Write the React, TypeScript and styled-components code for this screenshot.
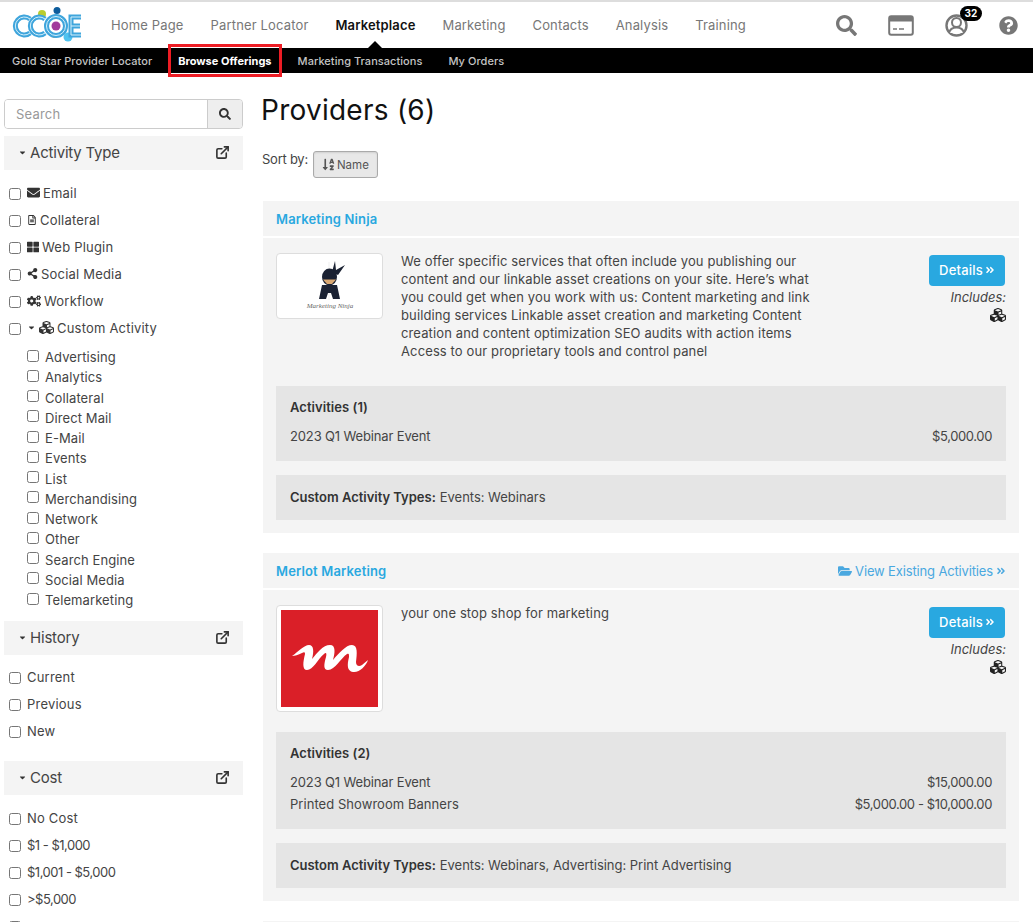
import React from "react"
import styled, { createGlobalStyle } from "styled-components"
import {
  FaAngleDoubleRight,
  FaCaretDown,
  FaCogs,
  FaCubes,
  FaEnvelope,
  FaFolderOpen,
  FaQuestionCircle,
  FaRegFileAlt,
  FaSearch,
  FaShareAlt,
  FaSortAlphaDown,
  FaThLarge,
} from "react-icons/fa"
import { ExternalLink } from "lucide-react"

const GlobalStyle = createGlobalStyle`
  html, body {
    margin: 0;
    height: 922px;
    overflow: hidden;
    background: #fff;
  }
  body {
    font-family: "Inter", "Liberation Sans", sans-serif;
    font-size: 13px;
    color: #444;
  }
  * {
    box-sizing: border-box;
  }
`

const Page = styled.div`
  height: 922px;
  overflow: hidden;
`
const TopBar = styled.header`
  height: 48px;
  border-top: 2px solid #ddd;
  display: flex;
  align-items: center;
  background: #fff;
`
const LogoWrap = styled.div`
  width: 111px;
  padding-left: 12px;
  display: flex;
`
const NavList = styled.nav`
  display: flex;
  gap: 27px;
  flex: 1;
`
const NavItem = styled.span<{ $active?: boolean }>`
  position: relative;
  font-size: 13px;
  letter-spacing: 0.15px;
  line-height: 46px;
  color: ${p => (p.$active ? "#111" : "#777")};
  font-weight: ${p => (p.$active ? 600 : 400)};
  &::after {
    content: "";
    display: ${p => (p.$active ? "block" : "none")};
    position: absolute;
    left: 50%;
    bottom: 0;
    margin-left: -7px;
    border: 7px solid transparent;
    border-top: 0;
    border-bottom-color: #000;
  }
`
const IconTray = styled.div`
  position: relative;
  display: flex;
  align-items: center;
  color: #777;
  padding-right: 15px;
`
const TrayIcon = styled.span<{ $gap: number }>`
  display: flex;
  margin-right: ${p => p.$gap}px;
  &:last-child {
    margin-right: 0;
  }
`
const Badge = styled.span`
  position: absolute;
  left: 124px;
  top: -8px;
  width: 22px;
  height: 15px;
  border-radius: 8px;
  background: #000;
  color: #fff;
  font-size: 10px;
  font-weight: 700;
  line-height: 15px;
  text-align: center;
`
const SubBar = styled.nav`
  height: 25px;
  background: #000;
  display: flex;
  gap: 26px;
  padding-left: 12px;
  align-items: center;
`
const SubItem = styled.span<{ $active?: boolean }>`
  position: relative;
  font-size: 11px;
  letter-spacing: ${p => (p.$active ? "0" : "0.05px")};
  font-weight: ${p => (p.$active ? 700 : 500)};
  color: ${p => (p.$active ? "#fff" : "#c4c4c4")};
  &::before {
    content: "";
    display: ${p => (p.$active ? "block" : "none")};
    position: absolute;
    left: -10px;
    right: -10px;
    top: -10px;
    bottom: -9px;
    border: 3px solid #ed1c24;
  }
`
const Layout = styled.div`
  display: grid;
  grid-template-columns: 239px 756px;
  column-gap: 20px;
  padding-left: 4px;
`
const Sidebar = styled.aside`
  padding-top: 26px;
`
const SearchBox = styled.div`
  display: flex;
  height: 30px;
  border: 1px solid #ccc;
  border-radius: 4px;
  overflow: hidden;
`
const SearchInput = styled.input`
  flex: 1;
  min-width: 0;
  border: 0;
  outline: 0;
  padding: 0 11px;
  font: inherit;
  letter-spacing: 0.2px;
  color: #444;
  &::placeholder {
    color: #999;
  }
`
const SearchButton = styled.button`
  width: 35px;
  border: 0;
  border-left: 1px solid #ccc;
  background: #eee;
  color: #333;
  display: flex;
  align-items: center;
  justify-content: center;
  padding: 0;
`
const FilterHead = styled.div<{ $top: number }>`
  margin-top: ${p => p.$top}px;
  height: 34px;
  background: #f4f4f4;
  display: flex;
  align-items: center;
  padding: 0 13px 2px 14px;
  font-size: 15px;
  letter-spacing: -0.2px;
  color: #444;
`
const Caret = styled(FaCaretDown)`
  font-size: 9px;
  margin-right: 3px;
  color: #333;
`
const HeadTitle = styled.span`
  flex: 1;
`
const FilterList = styled.div<{ $top: number }>`
  margin-top: ${p => p.$top}px;
`
const FilterRow = styled.label<{ $tight?: boolean }>`
  height: 27px;
  display: flex;
  align-items: center;
  padding: 0 0 2px 5px;
  letter-spacing: ${p => (p.$tight ? "-0.5px" : "0.2px")};
  white-space: nowrap;
  color: #444;
  & > svg {
    color: #333;
    margin-right: 3px;
  }
  & > input {
    margin-top: 3px;
  }
`
const Check = styled.input.attrs({ type: "checkbox" })`
  width: 12px;
  height: 12px;
  margin: 1px 6px 0 0;
  flex: none;
`
const SubList = styled.div`
  margin-top: 5px;
  padding-left: 23px;
`
const SubRow = styled.label`
  height: 20.25px;
  display: flex;
  align-items: center;
  letter-spacing: 0.1px;
  & > input {
    margin: -3px 6px 0 0;
  }
`
const Main = styled.main`
  padding-top: 19px;
`
const Title = styled.h1`
  margin: 0 0 0 -2px;
  font-size: 28px;
  font-weight: 400;
  line-height: 36px;
  letter-spacing: 0.25px;
  color: #111;
`
const SortRow = styled.div`
  margin: 23px 0 23px -1px;
  height: 27px;
  display: flex;
  align-items: flex-start;
`
const SortLabel = styled.span`
  line-height: 17px;
  margin-right: 5px;
  letter-spacing: -0.25px;
`
const SortButton = styled.button`
  width: 65px;
  height: 27px;
  display: flex;
  align-items: center;
  justify-content: center;
  gap: 2px;
  background: #e8e8e8;
  border: 1px solid #aaa;
  border-radius: 3px;
  font: inherit;
  font-size: 11.5px;
  color: #555;
  padding: 0;
  box-shadow: inset 0 1px 2px rgba(0, 0, 0, 0.1);
`
const Card = styled.section`
  background: #f4f4f4;
  margin-bottom: 20px;
  padding-bottom: 13px;
`
const CardHead = styled.div`
  height: 37px;
  border-bottom: 2px solid #fff;
  padding: 0 13px;
  display: flex;
  justify-content: space-between;
  align-items: center;
`
const ProviderName = styled.a`
  color: #29a8e0;
  font-weight: 600;
  letter-spacing: 0.15px;
`
const ExistingLink = styled.a`
  display: flex;
  align-items: center;
  gap: 3px;
  color: #4aa8e0;
  letter-spacing: -0.15px;
`
const CardBody = styled.div`
  padding: 15px 13px 0;
`
const InfoRow = styled.div`
  display: flex;
  margin-bottom: 20px;
`
const LogoBox = styled.div<{ $height: number }>`
  flex: none;
  width: 107px;
  height: ${p => p.$height}px;
  background: #fff;
  border: 1px solid #ddd;
  border-radius: 4px;
  padding: 4px;
  display: flex;
  align-items: center;
  justify-content: center;
`
const Blurb = styled.p`
  flex: 1;
  margin: -1px 0 0 18px;
  padding-bottom: 6px;
  line-height: 18px;
  letter-spacing: 0.12px;
  white-space: nowrap;
`
const Aside = styled.div`
  flex: none;
  width: 90px;
  display: flex;
  flex-direction: column;
  align-items: flex-end;
`
const DetailsButton = styled.button`
  width: 76px;
  height: 31px;
  margin: 2px 1px 0 0;
  border: 0;
  border-radius: 4px;
  background: #29a8e0;
  color: #fff;
  font: inherit;
  font-weight: 500;
  letter-spacing: 0.2px;
  display: flex;
  align-items: center;
  justify-content: center;
  gap: 2px;
  padding: 0 0 1px;
`
const Includes = styled.em`
  margin-top: 2px;
  line-height: 18px;
  letter-spacing: 0;
`
const IncludeIcon = styled(FaCubes)`
  font-size: 16px;
  margin-top: 1px;
  color: #222;
`
const Panel = styled.div`
  background: #e5e5e5;
  padding: 12px 14px 14px;
  letter-spacing: 0.05px;
`
const PanelTitle = styled.div`
  font-weight: 600;
  line-height: 18px;
  margin-bottom: 9px;
  color: #333;
`
const ActivityRow = styled.div`
  display: flex;
  justify-content: space-between;
  line-height: 22px;
`
const NumberedName = styled.span`
  letter-spacing: -0.14px;
`
const Amount = styled.span`
  letter-spacing: -0.38px;
`
const TypesPanel = styled.div`
  margin-top: 14px;
  height: 45px;
  background: #e5e5e5;
  padding: 0 14px 2px;
  display: flex;
  align-items: center;
  gap: 4px;
  letter-spacing: -0.02px;
  & > b {
    font-weight: 600;
    color: #333;
  }
`

const BrandLogo = () => (
  <svg width="70" height="36" viewBox="0 0 70 36">
    <circle cx="45" cy="3.500" r="3.500" fill="#0d5c9c" />
    <circle cx="30" cy="7" r="4" fill="#b9cc2e" />
    <circle cx="56" cy="30" r="4.500" fill="#4fc3f0" />
    <circle cx="42" cy="29" r="2" fill="#e0a060" />
    <g fill="none" stroke="#3fa5dc" strokeWidth="5">
      <path d="M18 12 A9 9 0 1 0 18 26" />
      <path d="M33 12 A9 9 0 1 0 33 26" />
      <circle cx="44" cy="19" r="9.500" />
      <path d="M69 10 H59 V28 H69 M59 19 H68" />
    </g>
    <g fill="none" stroke="#d5f0fb" strokeWidth="1">
      <path d="M18 12 A9 9 0 1 0 18 26" />
      <path d="M33 12 A9 9 0 1 0 33 26" />
      <circle cx="44" cy="19" r="9.500" />
      <path d="M69 10 H59 V28 H69 M59 19 H68" />
    </g>
    <circle cx="44" cy="19" r="4.500" fill="#a23c9c" />
  </svg>
)

const PaymentIcon = () => (
  <svg width="26" height="21" viewBox="0 0 26 21">
    <rect x="1.200" y="1.200" width="23.600" height="18.600" rx="2" fill="none" stroke="#777" strokeWidth="2" />
    <rect x="1" y="2" width="24" height="4.500" fill="#777" />
    <path d="M5 14 H9 M11 14 H16" stroke="#777" strokeWidth="1.600" />
  </svg>
)

const AccountIcon = () => (
  <svg width="23" height="23" viewBox="0 0 23 23">
    <circle cx="11.500" cy="11.500" r="10" fill="none" stroke="#777" strokeWidth="2.400" />
    <circle cx="11.500" cy="8.500" r="4.500" fill="#fff" stroke="#777" strokeWidth="2" />
    <path d="M4 19 C5 14.500 8 13.500 11.500 13.500 C15 13.500 18 14.500 19 19" fill="#fff" stroke="#777" strokeWidth="2" />
  </svg>
)

const NinjaLogo = () => (
  <svg width="80" height="56" viewBox="0 0 80 56">
    <path d="M39 4 V42" stroke="#ddd" strokeWidth="0.500" />
    <path d="M42 14 L45 3 L46 12 L55 7 L48 17 Z" fill="#1b2233" />
    <ellipse cx="39.500" cy="19" rx="7.500" ry="8.500" fill="#1b2233" />
    <path d="M33 21.500 H46 L42 26 H37 Z" fill="#d9a873" />
    <path d="M32 27 H47 L50 41 H43 L41 35 H38 L36 41 H29 Z" fill="#1b2233" />
    <text x="40" y="50" fontSize="7" fontStyle="italic" textAnchor="middle" fill="#666" fontFamily="Liberation Serif, serif">
      Marketing Ninja
    </text>
  </svg>
)

const MerlotLogo = () => (
  <svg width="97" height="97" viewBox="0 0 97 97">
    <rect width="97" height="97" fill="#da1f28" />
    <path
      d="M11 46 C17 42 23 35 28 35 C33 35 33 42 31 49 C36 43 42 35 49 35 C55 35 54 43 52 50 C58 43 65 35 71 35 C77 35 76 44 75 52 C75 56 78 57 81 55 L87 50 C85 56 78 63 72 62 C66 61 66 55 68 47 C68 44 68 43 66 44 C60 48 54 60 47 60 C42 60 43 54 45 47 C46 43 45 42 43 44 C37 49 32 60 26 60 C21 60 22 52 24 44 C24 42 23 42 21 43 C17 45 14 46 11 46 Z"
      fill="#fff"
    />
  </svg>
)

const topFilters = [
  { label: "Email", icon: <FaEnvelope size={13} /> },
  { label: "Collateral", icon: <FaRegFileAlt size={10} /> },
  { label: "Web Plugin", icon: <FaThLarge size={12} /> },
  { label: "Social Media", icon: <FaShareAlt size={11} /> },
  { label: "Workflow", icon: <FaCogs size={14} /> },
]
const customTypes = [
  "Advertising",
  "Analytics",
  "Collateral",
  "Direct Mail",
  "E-Mail",
  "Events",
  "List",
  "Merchandising",
  "Network",
  "Other",
  "Search Engine",
  "Social Media",
  "Telemarketing",
]

function FilterHeading({ title, top }: { title: string; top: number }) {
  return (
    <FilterHead $top={top}>
      <Caret />
      <HeadTitle>{title}</HeadTitle>
      <ExternalLink size={15} strokeWidth={2.6} color="#333" />
    </FilterHead>
  )
}

function Filters() {
  return (
    <Sidebar>
      <SearchBox>
        <SearchInput placeholder="Search" />
        <SearchButton>
          <FaSearch size={12} />
        </SearchButton>
      </SearchBox>
      <FilterHeading title="Activity Type" top={7} />
      <FilterList $top={10}>
        {topFilters.map(f => (
          <FilterRow key={f.label}>
            <Check />
            {f.icon}
            {f.label}
          </FilterRow>
        ))}
        <FilterRow>
          <Check />
          <Caret />
          <FaCubes size={15} />
          Custom Activity
        </FilterRow>
      </FilterList>
      <SubList>
        {customTypes.map(t => (
          <SubRow key={t}>
            <Check />
            {t}
          </SubRow>
        ))}
      </SubList>
      <FilterHeading title="History" top={11} />
      <FilterList $top={9}>
        {["Current", "Previous", "New"].map(t => (
          <FilterRow key={t}>
            <Check />
            {t}
          </FilterRow>
        ))}
      </FilterList>
      <FilterHeading title="Cost" top={16} />
      <FilterList $top={10}>
        <FilterRow>
          <Check />
          No Cost
        </FilterRow>
        {["$1 - $1,000", "$1,001 - $5,000", ">$5,000", ""].map(t => (
          <FilterRow key={t} $tight>
            <Check />
            {t}
          </FilterRow>
        ))}
      </FilterList>
    </Sidebar>
  )
}

export default function App() {
  return (
    <Page>
      <GlobalStyle />
      <TopBar>
        <LogoWrap>
          <BrandLogo />
        </LogoWrap>
        <NavList>
          <NavItem>Home Page</NavItem>
          <NavItem>Partner Locator</NavItem>
          <NavItem $active>Marketplace</NavItem>
          <NavItem>Marketing</NavItem>
          <NavItem>Contacts</NavItem>
          <NavItem>Analysis</NavItem>
          <NavItem>Training</NavItem>
        </NavList>
        <IconTray>
          <TrayIcon $gap={31}>
            <FaSearch size={21} />
          </TrayIcon>
          <TrayIcon $gap={31}>
            <PaymentIcon />
          </TrayIcon>
          <TrayIcon $gap={31}>
            <AccountIcon />
          </TrayIcon>
          <TrayIcon $gap={0}>
            <FaQuestionCircle size={19} />
          </TrayIcon>
          <Badge>32</Badge>
        </IconTray>
      </TopBar>
      <SubBar>
        <SubItem>Gold Star Provider Locator</SubItem>
        <SubItem $active>Browse Offerings</SubItem>
        <SubItem>Marketing Transactions</SubItem>
        <SubItem>My Orders</SubItem>
      </SubBar>
      <Layout>
        <Filters />
        <Main>
          <Title>Providers (6)</Title>
          <SortRow>
            <SortLabel>Sort by:</SortLabel>
            <SortButton>
              <FaSortAlphaDown size={13} />
              Name
            </SortButton>
          </SortRow>
          <Card>
            <CardHead>
              <ProviderName>Marketing Ninja</ProviderName>
            </CardHead>
            <CardBody>
              <InfoRow>
                <LogoBox $height={66}>
                  <NinjaLogo />
                </LogoBox>
                <Blurb>
                  We offer specific services that often include you publishing our
                  <br />
                  content and our linkable asset creations on your site. Here’s what
                  <br />
                  you could get when you work with us: Content marketing and link
                  <br />
                  building services Linkable asset creation and marketing Content
                  <br />
                  creation and content optimization SEO audits with action items
                  <br />
                  Access to our proprietary tools and control panel
                </Blurb>
                <Aside>
                  <DetailsButton>
                    Details <FaAngleDoubleRight size={10} />
                  </DetailsButton>
                  <Includes>Includes:</Includes>
                  <IncludeIcon />
                </Aside>
              </InfoRow>
              <Panel>
                <PanelTitle>Activities (1)</PanelTitle>
                <ActivityRow>
                  <NumberedName>2023 Q1 Webinar Event</NumberedName>
                  <Amount>$5,000.00</Amount>
                </ActivityRow>
              </Panel>
              <TypesPanel>
                <b>Custom Activity Types:</b> Events: Webinars
              </TypesPanel>
            </CardBody>
          </Card>
          <Card>
            <CardHead>
              <ProviderName>Merlot Marketing</ProviderName>
              <ExistingLink>
                <FaFolderOpen size={14} /> View Existing Activities <FaAngleDoubleRight size={10} />
              </ExistingLink>
            </CardHead>
            <CardBody>
              <InfoRow>
                <LogoBox $height={107}>
                  <MerlotLogo />
                </LogoBox>
                <Blurb>your one stop shop for marketing</Blurb>
                <Aside>
                  <DetailsButton>
                    Details <FaAngleDoubleRight size={10} />
                  </DetailsButton>
                  <Includes>Includes:</Includes>
                  <IncludeIcon />
                </Aside>
              </InfoRow>
              <Panel>
                <PanelTitle>Activities (2)</PanelTitle>
                <ActivityRow>
                  <NumberedName>2023 Q1 Webinar Event</NumberedName>
                  <Amount>$15,000.00</Amount>
                </ActivityRow>
                <ActivityRow>
                  <span>Printed Showroom Banners</span>
                  <Amount>$5,000.00 - $10,000.00</Amount>
                </ActivityRow>
              </Panel>
              <TypesPanel>
                <b>Custom Activity Types:</b> Events: Webinars, Advertising: Print Advertising
              </TypesPanel>
            </CardBody>
          </Card>
          <Card />
        </Main>
      </Layout>
    </Page>
  )
}
